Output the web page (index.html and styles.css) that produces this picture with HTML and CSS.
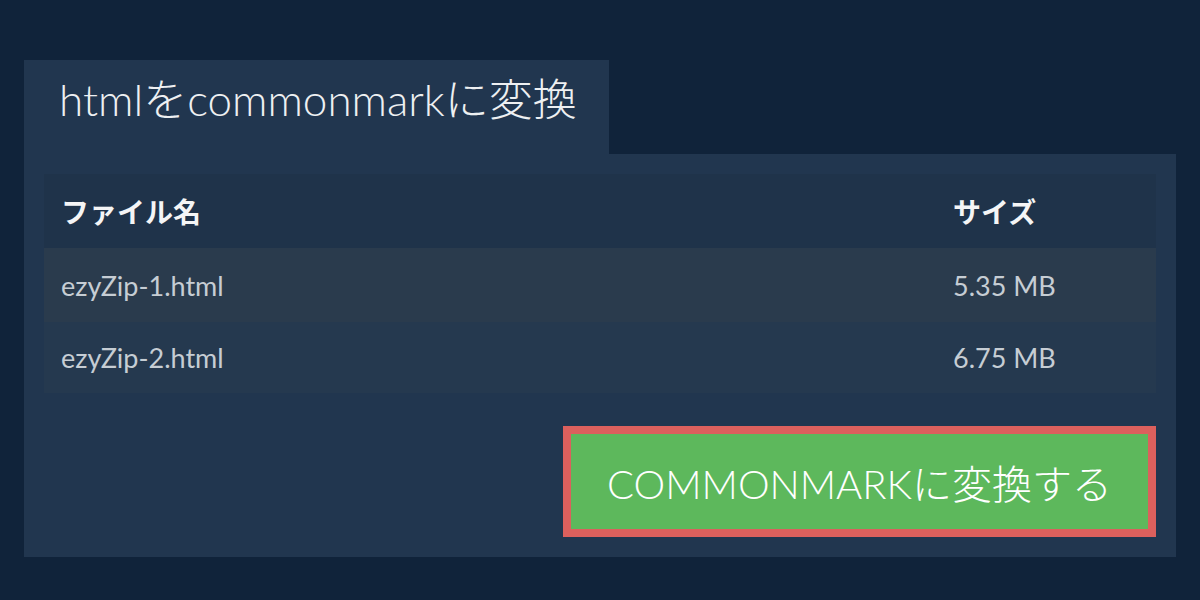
FILE: index.html
```html
<!DOCTYPE html>
<html lang="ja">
<head>
<meta charset="utf-8">
<link rel="stylesheet" href="styles.css">
</head>
<body>
<div class="page">
  <div class="tab"><h1 class="title">htmlをcommonmarkに変換</h1></div>
  <div class="card">
    <div class="table">
      <div class="row head"><div class="cell">ファイル名</div><div class="cell">サイズ</div></div>
      <div class="row odd"><div class="cell">ezyZip-1.html</div><div class="cell">5.35 MB</div></div>
      <div class="row even"><div class="cell">ezyZip-2.html</div><div class="cell">6.75 MB</div></div>
    </div>
    <div class="actions">
      <button class="convert">COMMONMARKに変換する</button>
    </div>
  </div>
</div>
</body>
</html>
```
FILE: styles.css
```css
html, body {
  margin: 0;
  padding: 0;
  background: #10233a;
  font-family: "Lato", "Noto Sans CJK JP", sans-serif;
}
.page {
  padding: 60px 24px 0 24px;
  display: flex;
  flex-direction: column;
  align-items: flex-start;
}
.tab {
  width: 585px;
  height: 94px;
  background: #21364f;
  box-sizing: border-box;
  padding-left: 35px;
  display: flex;
  align-items: center;
}
.title {
  margin: 0;
  font-weight: 300;
  font-size: 44px;
  color: #eef0f2;
  line-height: 1;
  margin-top: -16px;
}
.card {
  align-self: stretch;
  background: #21364f;
  padding: 20px 20px 20px 20px;
}
.table {
  display: flex;
  flex-direction: column;
}
.row {
  display: grid;
  grid-template-columns: 1fr 220px;
  height: 74px;
  align-items: center;
  font-size: 27px;
}
.cell {
  padding-left: 17px;
}
.head {
  background: #1f334a;
  color: #f4f5f6;
  font-weight: 700;
  font-size: 28px;
  height: 74px;
}
.odd {
  background: #2a3b4d;
  color: #c6cdd4;
}
.even {
  background: #25394f;
  color: #c6cdd4;
  height: 71px;
}
.actions {
  display: flex;
  justify-content: flex-end;
  padding-top: 33px;
}
.convert {
  width: 593px;
  height: 111px;
  box-sizing: border-box;
  border: 8px solid #dc605d;
  background: #5db85c;
  color: #ffffff;
  font-family: "Lato", "Noto Sans CJK JP", sans-serif;
  font-weight: 300;
  font-size: 40px;
  padding: 0;
  cursor: pointer;
}
```
